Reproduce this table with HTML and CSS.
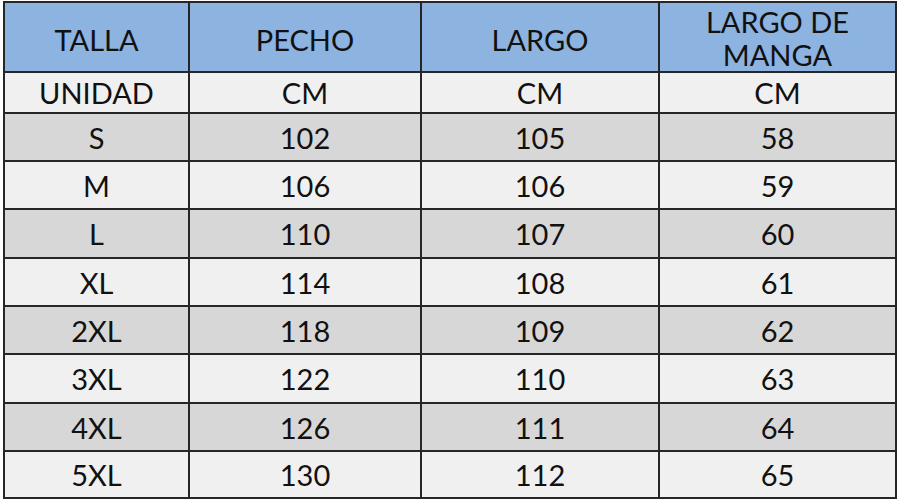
FILE: index.html
```html
<!DOCTYPE html>
<html lang="es">
<head>
<meta charset="utf-8">
<title>Tabla de tallas</title>
<link rel="stylesheet" href="styles.css">
</head>
<body>
<div class="sheet">
  <div class="cell head">TALLA</div>
  <div class="cell head">PECHO</div>
  <div class="cell head">LARGO</div>
  <div class="cell head two">LARGO DE<br>MANGA</div>

  <div class="cell light">UNIDAD</div>
  <div class="cell light">CM</div>
  <div class="cell light">CM</div>
  <div class="cell light">CM</div>

  <div class="cell grey">S</div><div class="cell grey">102</div><div class="cell grey">105</div><div class="cell grey">58</div>
  <div class="cell light">M</div><div class="cell light">106</div><div class="cell light">106</div><div class="cell light">59</div>
  <div class="cell grey">L</div><div class="cell grey">110</div><div class="cell grey">107</div><div class="cell grey">60</div>
  <div class="cell light">XL</div><div class="cell light">114</div><div class="cell light">108</div><div class="cell light">61</div>
  <div class="cell grey">2XL</div><div class="cell grey">118</div><div class="cell grey">109</div><div class="cell grey">62</div>
  <div class="cell light">3XL</div><div class="cell light">122</div><div class="cell light">110</div><div class="cell light">63</div>
  <div class="cell grey">4XL</div><div class="cell grey">126</div><div class="cell grey">111</div><div class="cell grey">64</div>
  <div class="cell light">5XL</div><div class="cell light">130</div><div class="cell light">112</div><div class="cell light">65</div>
</div>
</body>
</html>
```

FILE: styles.css
```css
html, body {
  margin: 0;
  padding: 0;
  background: #ffffff;
}

body {
  padding: 1px 0 0 3px;
  font-family: "Lato", "Open Sans", sans-serif;
}

.sheet {
  display: grid;
  grid-template-columns: 183px 230px 236px 235px;
  grid-template-rows: 68px 39px 46px 46px 47px 46px 46px 47px 46px 45px;
  gap: 2px;
  padding: 2px;
  width: max-content;
  background: #262626;
}

.cell {
  display: flex;
  align-items: center;
  justify-content: center;
  text-align: center;
  font-size: 29px;
  color: #111111;
  line-height: 1;
}

.head {
  background: #8db3e0;
  padding-top: 4px;
}

.head.two {
  line-height: 33px;
  padding-top: 2px;
}

.light {
  background: #f0f0f0;
}

.grey {
  background: #d7d7d7;
}
```
